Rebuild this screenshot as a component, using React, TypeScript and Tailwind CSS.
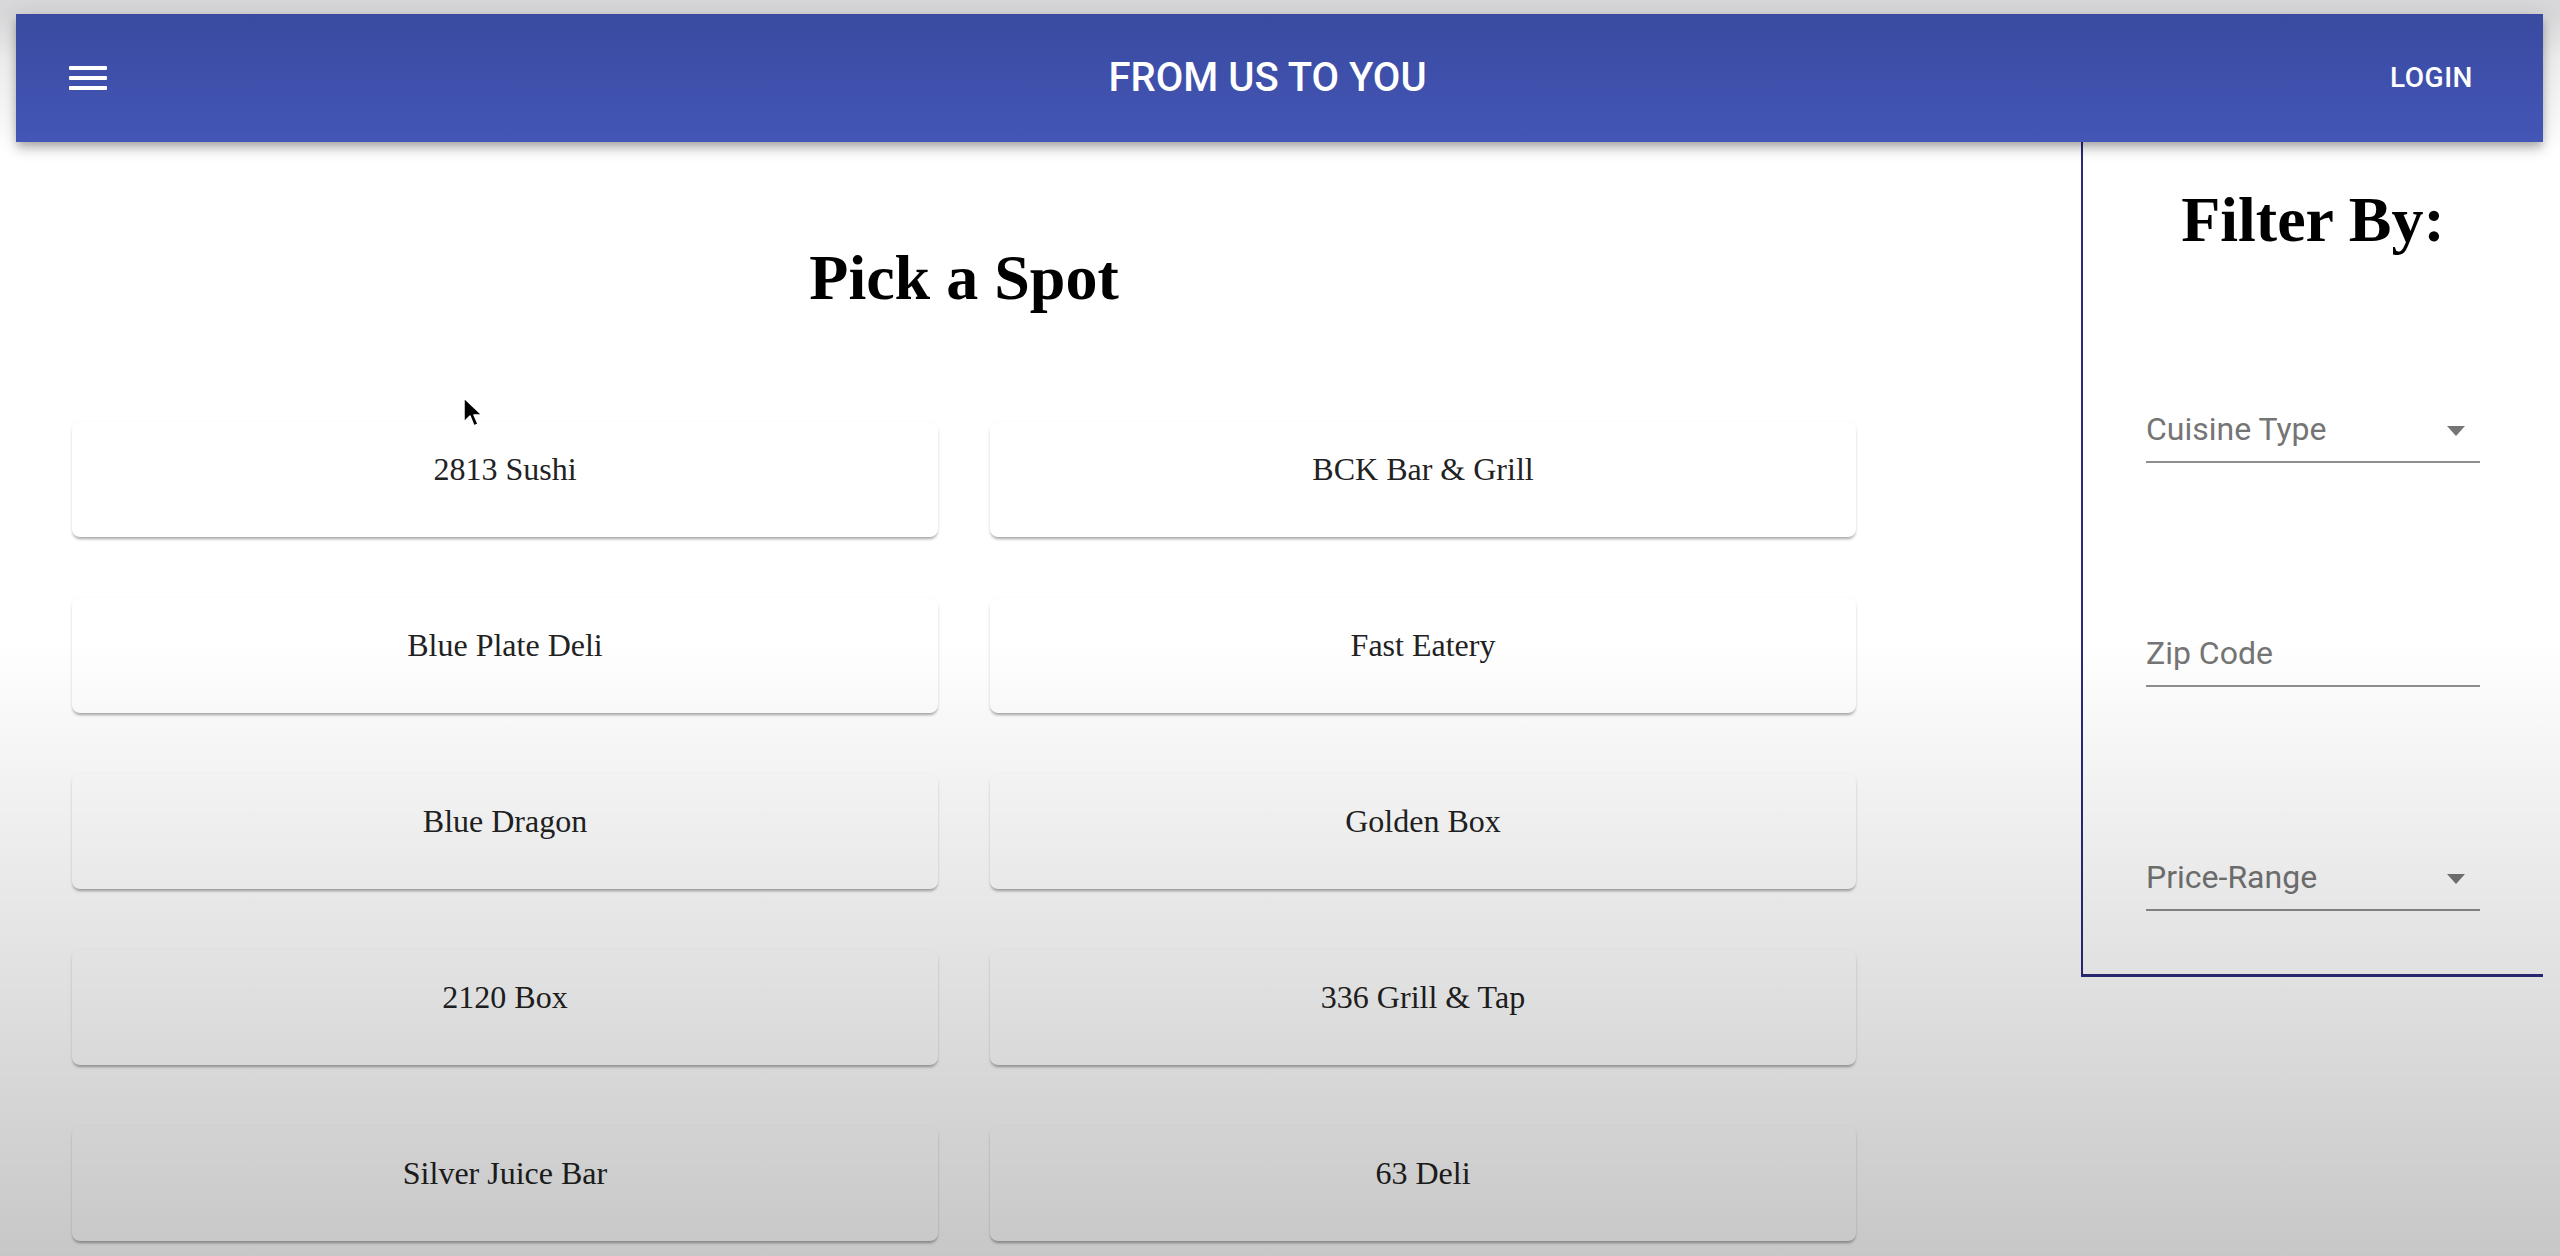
const SPOTS = [
  "2813 Sushi", "BCK Bar & Grill",
  "Blue Plate Deli", "Fast Eatery",
  "Blue Dragon", "Golden Box",
  "2120 Box", "336 Grill & Tap",
  "Silver Juice Bar", "63 Deli",
];

const serif = { fontFamily: '"Liberation Serif", "Times New Roman", serif' };

function MenuIcon() {
  return (
    <svg width="38" height="24" viewBox="0 0 38 24" className="shrink-0">
      <rect x="0" y="0" width="38" height="4" rx="1" fill="#fff" />
      <rect x="0" y="10" width="38" height="4" rx="1" fill="#fff" />
      <rect x="0" y="20" width="38" height="4" rx="1" fill="#fff" />
    </svg>
  );
}

function Caret() {
  return (
    <svg width="18" height="10" viewBox="0 0 18 10" className="mb-[12px] mr-[15px]">
      <polygon points="0,0 18,0 9,10" fill="#757575" />
    </svg>
  );
}

function Field({ label, select }: { label: string; select?: boolean }) {
  return (
    <div className="flex items-end justify-between pb-[13px] border-b-2 border-[#8e8e8e] font-['Roboto',sans-serif]">
      <span className="text-[32px] leading-[38px] text-[#757575]">{label}</span>
      {select && <Caret />}
    </div>
  );
}

function SpotCard({ name }: { name: string }) {
  return (
    <div className="h-[115px] rounded-lg bg-white pt-[29px] text-center shadow-[0_3px_3px_-1px_rgba(0,0,0,0.32),0_1px_4px_0_rgba(0,0,0,0.06)]">
      <span className="text-[32px] leading-[36px] text-[#222]" style={serif}>{name}</span>
    </div>
  );
}

export default function App() {
  return (
    <div className="relative h-[1256px] overflow-hidden bg-[linear-gradient(to_bottom,#d8d8da_0px,#d8d8da_14px,#eeeeee_60px,#ffffff_150px)] pt-[14px]">
      {/* App bar */}
      <header className="relative z-10 mx-[16px] mr-[17px] flex h-[128px] items-center bg-gradient-to-b from-[#394aa0] to-[#4456b6] pl-[53px] pr-[70px] font-['Roboto',sans-serif] text-white shadow-[0_4px_8px_-2px_rgba(0,0,0,0.2),0_8px_10px_0_rgba(0,0,0,0.14),0_2px_20px_0_rgba(0,0,0,0.12)]">
        <MenuIcon />
        <div className="flex-1 pl-[38px] text-center text-[40px] font-medium leading-none">FROM US TO YOU</div>
        <button className="text-[28px] font-medium leading-none tracking-[0.5px]">LOGIN</button>
      </header>

      <div className="flex items-start">
        {/* Spots */}
        <main className="ml-[72px] w-[1784px]">
          <h1 className="mt-[99px] text-center text-[64px] font-bold leading-[74px] text-black" style={serif}>
            Pick a Spot
          </h1>
          <div className="mt-[107px] grid grid-cols-2 gap-x-[52px] gap-y-[61px]">
            {SPOTS.map(s => <SpotCard key={s} name={s} />)}
          </div>
        </main>

        {/* Filter panel */}
        <aside className="ml-auto mr-[17px] w-[462px] border-b-[3px] border-l-2 border-[#2b2a7c] pb-[63px]">
          <h2 className="mt-[41px] text-center text-[64px] font-bold leading-[74px] text-black" style={serif}>
            Filter By:
          </h2>
          <div className="mt-[153px] flex flex-col gap-[171px] px-[63px]">
            <Field label="Cuisine Type" select />
            <Field label="Zip Code" />
            <Field label="Price-Range" select />
          </div>
        </aside>
      </div>

      {/* mouse pointer */}
      <svg width="20" height="32" viewBox="0 0 20 32" className="pointer-events-none absolute left-[463px] top-[397px] z-20">
        <path d="M1 1 L1 25 L7 19 L11 29 L15 27 L11 18 L19 18 Z" fill="#000" stroke="#fff" strokeWidth="1.5" strokeLinejoin="round" />
      </svg>

      {/* video vignette */}
      <div className="pointer-events-none absolute inset-0 z-30 bg-[linear-gradient(to_bottom,rgba(0,0,0,0)_0px,rgba(0,0,0,0)_640px,rgba(0,0,0,0.22)_1256px)]" />
    </div>
  );
}
